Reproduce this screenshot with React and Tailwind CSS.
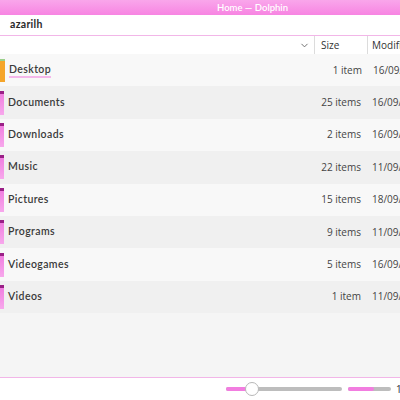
import React from "react";
import { FiChevronDown } from "react-icons/fi";

const folders = [
  { name: "Desktop", size: "1 item", date: "16/09", color: "orange" },
  { name: "Documents", size: "25 items", date: "16/09" },
  { name: "Downloads", size: "2 items", date: "16/09" },
  { name: "Music", size: "22 items", date: "11/09" },
  { name: "Pictures", size: "15 items", date: "18/09" },
  { name: "Programs", size: "9 items", date: "11/09" },
  { name: "Videogames", size: "5 items", date: "16/09" },
  { name: "Videos", size: "1 item", date: "11/09" },
];

const FolderEdge = ({ color }) =>
  color === "orange" ? (
    <div className="w-[5px] h-[23px] shrink-0 bg-[#f5a52a] border-t-2 border-[#9bd08a]" />
  ) : (
    <div className="w-[4px] h-[24px] shrink-0 bg-gradient-to-b from-[#f07ee0] to-[#f7a8ec] border-t-[3px] border-[#9a1f86]" />
  );

const App = () => {
  return (
    <div className="w-[400px] h-[400px] overflow-hidden flex flex-col bg-white font-['Lato',sans-serif] text-[#3a3a3a]">
      {/* title bar */}
      <div className="h-[15px] shrink-0 bg-gradient-to-b from-[#f9a6eb] to-[#f784e2] flex items-center">
        <span className="pl-[217px] text-[9.5px] text-white font-semibold leading-none whitespace-nowrap">
          Home — Dolphin
        </span>
      </div>

      {/* location bar */}
      <div className="h-[21px] shrink-0 flex items-center pl-[10px] border-b border-[#f2b6e8]">
        <span className="text-[10.5px] font-bold text-[#2a2a2a] tracking-[0.3px]">azarilh</span>
      </div>

      {/* header */}
      <div className="h-[18px] shrink-0 flex items-stretch text-[10px] text-[#333] font-['Open_Sans',sans-serif]">
        <div className="w-[314px] shrink-0 flex items-center justify-end pr-[4px]">
          <FiChevronDown className="text-[#666] w-[11px] h-[11px]" />
        </div>
        <div className="w-[53px] shrink-0 border-l border-[#dcdcdc] flex items-center pl-[6px]">Size</div>
        <div className="shrink-0 border-l border-[#dcdcdc] flex items-center pl-[4px] whitespace-nowrap">
          Modified
        </div>
      </div>

      {/* rows */}
      <div className="flex-1 flex flex-col bg-[#f5f5f5]">
        {folders.map((f, i) => (
          <div
            key={f.name}
            className={`h-[32.4px] shrink-0 flex items-center ${
              i % 2 === 0 ? "bg-[#f8f8f8]" : "bg-[#f0f0f0]"
            }`}>
            <FolderEdge color={f.color} />
            <div className="w-[310px] shrink-0 pl-[4px] text-[10.5px] font-semibold tracking-[0.4px]">
              <span className={f.name === "Desktop" ? "border-b-2 border-[#f4b7ea] pb-[1px]" : ""}>
                {f.name}
              </span>
            </div>
            <div className="w-[47px] shrink-0 text-right text-[10px] text-[#444] font-['Open_Sans',sans-serif] whitespace-nowrap">
              {f.size}
            </div>
            <div className="shrink-0 pl-[11px] text-[10px] text-[#444] font-['Open_Sans',sans-serif] whitespace-nowrap">
              {f.date}/2023
            </div>
          </div>
        ))}
      </div>

      {/* status bar */}
      <div className="h-[23px] shrink-0 border-t border-[#f2b6e8] bg-white flex items-center">
        <div className="ml-[226px] w-[116px] shrink-0 h-[4px] rounded-full bg-[#bdbdbd] relative">
          <div className="w-[22px] h-[4px] rounded-full bg-[#f27de0]" />
          <div className="absolute left-[19px] top-[-5px] w-[14px] h-[14px] rounded-full bg-white border border-[#b8b8b8]" />
        </div>
        <div className="ml-[6px] w-[43px] shrink-0 h-[4px] rounded-full bg-[#bdbdbd]">
          <div className="w-[26px] h-[4px] rounded-full bg-[#f27de0]" />
        </div>
        <span className="ml-[5px] shrink-0 text-[10px] text-[#333] font-['Open_Sans',sans-serif]">100%</span>
      </div>
    </div>
  );
};

export default App;
